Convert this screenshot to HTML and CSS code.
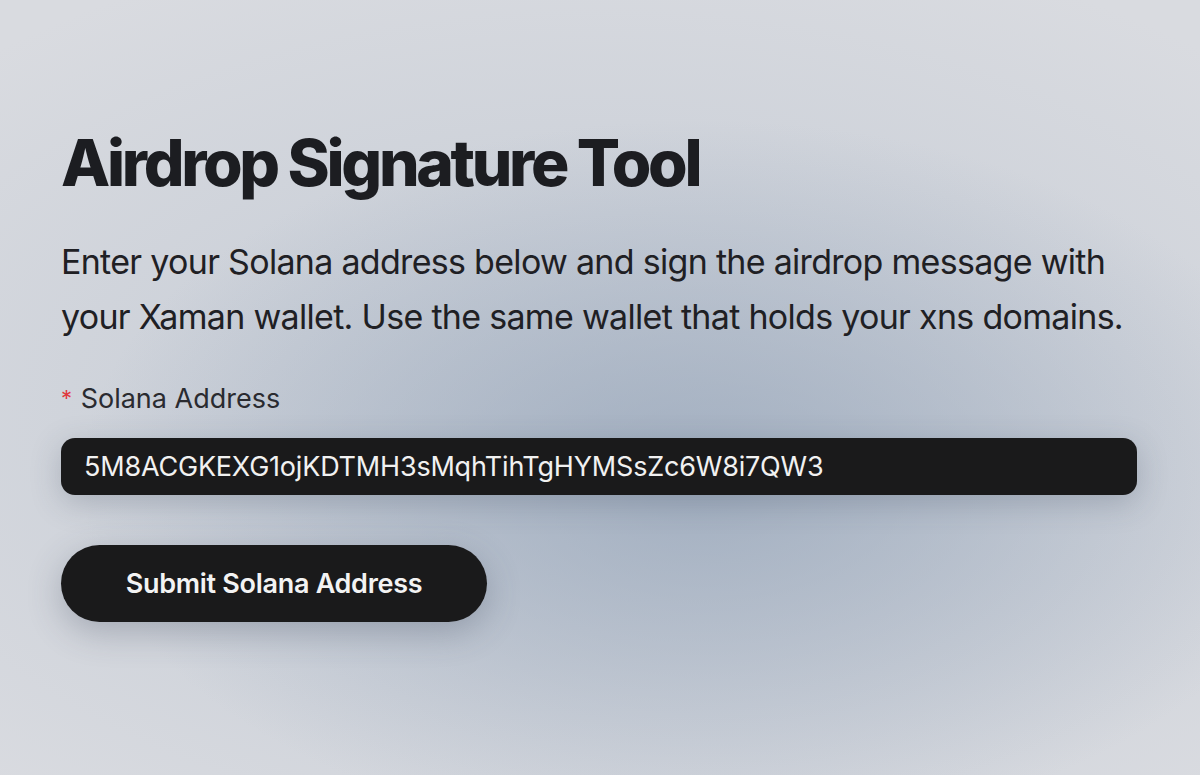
FILE: index.html
```html
<!DOCTYPE html>
<html lang="en">

<head>
  <meta charset="UTF-8">
  <title>Airdrop Signature Tool</title>
  <link rel="stylesheet" href="styles.css">
</head>

<body>
  <main class="page">
    <h1 class="title">Airdrop Signature Tool</h1>
    <p class="intro">Enter your Solana address below and sign the airdrop message with your Xaman wallet. Use the same wallet that holds your xns domains.</p>

    <form class="form">
      <label class="label" for="sol"><span class="req">*</span> Solana Address</label>
      <input class="field" id="sol" type="text" value="5M8ACGKEXG1ojKDTMH3sMqhTihTgHYMSsZc6W8i7QW3">
      <button class="submit" type="button">Submit Solana Address</button>
    </form>
  </main>
</body>

</html>
```

FILE: styles.css
```css
html {
  background: #d6d9de;
}

body {
  margin: 0;
  min-height: 775px;
  font-family: Inter, "Noto Sans", sans-serif;
  color: #1c1d21;
  background:
    radial-gradient(ellipse 620px 360px at 700px 480px, rgba(150, 165, 185, 0.75), rgba(150, 165, 185, 0) 100%),
    radial-gradient(ellipse 900px 500px at 600px 420px, rgba(180, 190, 204, 0.6), rgba(180, 190, 204, 0) 100%),
    #d9dbe0;
}

.page {
  padding: 124px 63px 0 61px;
}

.title {
  margin: 0;
  font-size: 64px;
  font-weight: 800;
  letter-spacing: -3.3px;
  line-height: 78px;
}

.intro {
  margin: 32px 0 0;
  font-size: 34px;
  line-height: 55px;
  letter-spacing: -0.7px;
  color: #1f2024;
}

.form {
  display: flex;
  flex-direction: column;
  align-items: flex-start;
  margin-top: 36px;
}

.label {
  font-size: 27px;
  line-height: 36px;
  color: #2a2b30;
}

.req {
  color: #e0393e;
  font-size: 22px;
  margin-right: 1px;
  vertical-align: 2px;
}

.field {
  box-sizing: border-box;
  width: 100%;
  height: 57px;
  margin-top: 21px;
  padding: 0 23px;
  border: 0;
  border-radius: 14px;
  background: #1a1a1b;
  color: #f1f1f1;
  font: 400 27px Inter, "Noto Sans", sans-serif;
  letter-spacing: -0.2px;
  box-shadow: 0 8px 30px rgba(60, 70, 90, 0.25);
  outline: none;
}

.submit {
  margin-top: 50px;
  width: 426px;
  height: 77px;
  border: 0;
  border-radius: 39px;
  background: #1a1a1b;
  color: #f3f3f3;
  font: 600 27px Inter, "Noto Sans", sans-serif;
  letter-spacing: -0.3px;
  box-shadow: 0 10px 34px rgba(60, 70, 90, 0.3);
}
```
